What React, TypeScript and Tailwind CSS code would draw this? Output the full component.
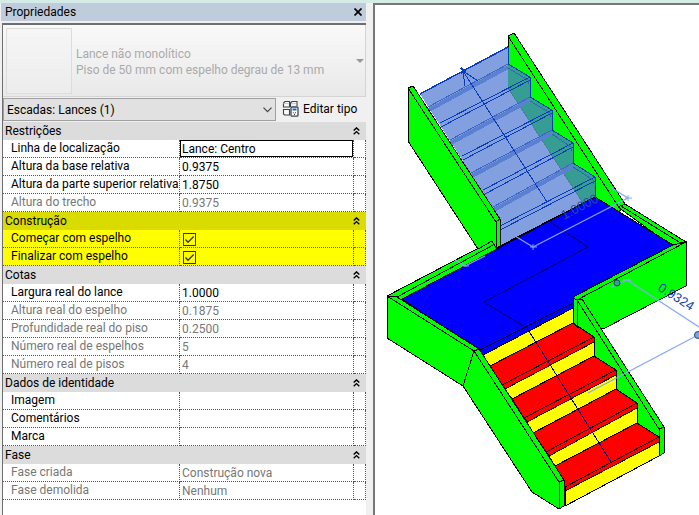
import React from 'react';
import clsx from 'clsx';

interface Property {
  label: string;
  value?: string;
  checked?: boolean;
  readOnly?: boolean;
  active?: boolean;
}

interface PropertyGroup {
  title: string;
  highlight?: boolean;
  items: Property[];
}

const groups: PropertyGroup[] = [
  {
    title: 'Restrições',
    items: [
      { label: 'Linha de localização', value: 'Lance: Centro', active: true },
      { label: 'Altura da base relativa', value: '0.9375' },
      { label: 'Altura da parte superior relativa', value: '1.8750' },
      { label: 'Altura do trecho', value: '0.9375', readOnly: true },
    ],
  },
  {
    title: 'Construção',
    highlight: true,
    items: [
      { label: 'Começar com espelho', checked: true },
      { label: 'Finalizar com espelho', checked: true },
    ],
  },
  {
    title: 'Cotas',
    items: [
      { label: 'Largura real do lance', value: '1.0000' },
      { label: 'Altura real do espelho', value: '0.1875', readOnly: true },
      { label: 'Profundidade real do piso', value: '0.2500', readOnly: true },
      { label: 'Número real de espelhos', value: '5', readOnly: true },
      { label: 'Número real de pisos', value: '4', readOnly: true },
    ],
  },
  {
    title: 'Dados de identidade',
    items: [
      { label: 'Imagem', value: '' },
      { label: 'Comentários', value: '' },
      { label: 'Marca', value: '' },
    ],
  },
  {
    title: 'Fase',
    items: [
      { label: 'Fase criada', value: 'Construção nova', readOnly: true },
      { label: 'Fase demolida', value: 'Nenhum', readOnly: true },
    ],
  },
];

const CollapseIcon = () => (
  <svg viewBox="0 0 7 8" className="h-2 w-[7px]" fill="none" stroke="#000" strokeWidth="1.4">
    <path d="M0.7 3.6 L3.5 0.9 L6.3 3.6 M0.7 7.3 L3.5 4.6 L6.3 7.3" />
  </svg>
);

const EditTypeIcon = () => (
  <svg viewBox="0 0 17 17" className="h-[17px] w-[17px] shrink-0" fill="none" stroke="#3c4450" strokeWidth="1.1">
    <path d="M3 1.5h4.5v5.5H1.5V3zM10 1.5h5V6M10 1.5L8.5 3v4M1.5 9.5h6V15h-5l-1-1z" fill="#fafafa" />
    <path d="M1.5 3.5h5M9 3.5h5" stroke="#c8ccd2" />
    <rect x="9" y="7" width="7" height="9.2" rx="1" fill="#fff" strokeWidth="1.3" />
    <path d="M10.5 9.5h4" stroke="#1464c8" strokeWidth="2" />
    <path d="M10.8 12.7h1M13 12.7h1M12 14.4h1" />
  </svg>
);

const PropertyRow: React.FC<{ item: Property; id: string; highlight?: boolean }> = ({ item, id, highlight }) => (
  <tr className={clsx('h-[18px]', highlight ? 'bg-[#ffff00]' : 'bg-white')}>
    <th
      scope="row"
      className="h-[18px] border-r border-b border-dotted border-[#555] p-0 pl-2 text-left font-normal whitespace-nowrap"
    >
      <label htmlFor={id} className={clsx('block h-[17px] leading-[17px]', item.readOnly && 'text-[#777]')}>
        {item.label}
      </label>
    </th>
    <td className="h-[18px] border-r border-b border-dotted border-[#555] p-0">
      {item.checked !== undefined ? (
        <span className="relative block h-[17px] pt-[3px] pl-[3px]">
          <input
            id={id}
            type="checkbox"
            defaultChecked={item.checked}
            className="peer block h-[13px] w-[13px] appearance-none border border-[#333300]"
          />
          <svg
            viewBox="0 0 13 13"
            className="pointer-events-none invisible absolute top-[3px] left-[3px] h-[13px] w-[13px] peer-checked:visible"
            fill="none"
            stroke="#333300"
            strokeWidth="1.3"
          >
            <path d="M2.5 6.5 L5 9.2 L10.7 3.5" />
          </svg>
        </span>
      ) : (
        <input
          id={id}
          type="text"
          defaultValue={item.value}
          disabled={item.readOnly}
          className={clsx(
            'block h-[17px] w-full border bg-transparent pl-px leading-[15px] outline-none',
            item.active ? 'border-black' : 'border-transparent',
            item.readOnly && 'text-[#777]'
          )}
        />
      )}
    </td>
    <td className="h-[18px] border-r border-b border-dotted border-[#555] p-0" />
  </tr>
);

const PropertyTable = () => (
  <table className="w-full table-fixed border-separate border-spacing-0">
    <colgroup>
      <col className="w-[177px]" />
      <col />
      <col className="w-3" />
    </colgroup>
    {groups.map((group, g) => (
      <tbody key={group.title}>
        <tr className={clsx('h-[18px]', group.highlight ? 'bg-[#dadc00]' : 'bg-[#dcdcdc]')}>
          <th colSpan={3} scope="rowgroup" className="h-[18px] p-0 font-normal">
            <button type="button" className="flex h-[18px] w-full items-center justify-between pr-[6px] pl-[2px]">
              <span className="leading-[18px]">{group.title}</span>
              <CollapseIcon />
            </button>
          </th>
        </tr>
        {group.items.map((item, i) => (
          <PropertyRow key={item.label} item={item} id={`prop-${g}-${i}`} highlight={group.highlight} />
        ))}
      </tbody>
    ))}
  </table>
);

const PropertiesPanel = () => (
  <aside className="flex min-w-0 flex-col pr-[7px] pl-[2px]">
    <header className="-ml-px flex h-[18px] items-center justify-between bg-[#bfccdb] pl-1">
      <h1 className="leading-[18px]">Propriedades</h1>
      <button type="button" aria-label="Fechar" className="flex h-4 w-4 items-center justify-center">
        <svg viewBox="0 0 8 8" className="h-2 w-2" stroke="#000" strokeWidth="1.7">
          <path d="M0.5 0.5 L7.5 7.5 M7.5 0.5 L0.5 7.5" />
        </svg>
      </button>
    </header>

    <div className="mt-[2px] flex flex-1 flex-col border-t-2 border-l border-[#6e6e6e] bg-white">
      <button
        type="button"
        disabled
        className="flex h-[72px] items-center border-r border-b border-[#d4d4d4] bg-linear-to-b from-[#f9f9f9] to-[#e9e9e9] pr-px pl-[3px] text-left text-[#aaa]"
      >
        <span className="h-[66px] w-[66px] shrink-0 border border-[#dcdcdc] bg-linear-to-b from-[#f6f6f6] to-[#ececec]" />
        <span className="ml-1 flex-1 pt-[2px] leading-4 whitespace-nowrap">
          Lance não monolítico
          <br />
          Piso de 50 mm com espelho degrau de 13 mm
        </span>
        <svg viewBox="0 0 8 4" className="h-1 w-2 shrink-0" fill="#999">
          <path d="M0 0h8L4 4z" />
        </svg>
      </button>

      <div className="flex h-[25px] items-center bg-[#f0f0f0]">
        <div className="relative flex-1">
          <select
            aria-label="Seleção"
            className="block h-[23px] w-full appearance-none border border-[#a0a0a0] bg-[#e1e1e1] pl-[3px] leading-[20px]"
          >
            <option>Escadas: Lances (1)</option>
          </select>
          <svg
            viewBox="0 0 9 6"
            className="pointer-events-none absolute top-[9px] right-1 h-[6px] w-[9px]"
            fill="none"
            stroke="#444"
            strokeWidth="1.2"
          >
            <path d="M0.5 0.7 L4.5 4.7 L8.5 0.7" />
          </svg>
        </div>
        <button type="button" className="flex w-[90px] items-center gap-1 pb-[2px] pl-[6px] whitespace-nowrap">
          <EditTypeIcon />
          Editar tipo
        </button>
      </div>

      <PropertyTable />
    </div>
  </aside>
);

// right end, then left end of every riser foot and tread nose
const upperFeet = ['508,64 428,107', '530,97 450,140', '552,130 471,173', '573,163 493,207'];
const upperNoses = ['530,77 440,123', '552,110 462,156', '573,143 483,190', '595,177 500,226'];
const upperNosesLow = ['530,80 441,127', '552,113 463,160', '573,147 485,194', '595,181 500,230'];
const upperTreadSides = [
  'M508 68L528 80L528 84',
  'M530 101L550 113L550 117',
  'M552 134L571 147L571 151',
  'M573 167L593 180L593 184',
];

const treads = [
  '573,323 594,337 594,342 505,389 502,385 490,366',
  '594,356 616,370 616,375 527,422 524,418 512,399',
  '616,389 637,403 637,408 549,456 546,452 533,433',
  '637,423 659,437 659,442 565,491 565,487 555,466',
];
const risers = [
  '483,355 573,308 573,323 490,366',
  '505,389 594,342 594,356 512,399',
  '527,422 616,375 616,389 533,433',
  '549,456 637,408 637,423 555,466',
  '565,491 659,442 659,456 565,506',
];
const treadNoses = ['594,337 502,385', '616,370 524,418', '637,403 546,452', '659,437 565,487'];

const StairModel = () => (
  <svg
    viewBox="375 5 324 510"
    className="block h-auto w-full"
    role="img"
    aria-label="Escada"
    fill="none"
    stroke="#000"
    strokeWidth="1"
    shapeRendering="crispEdges"
  >
    {/* upper flight, right stringer */}
    <path d="M508 36L514 33L625 204L618 213L595 197L508 104z" fill="#00ff00" />
    <path d="M508 36L618 206" />

    {/* landing */}
    <path d="M387 296L492 241L497 244L497 250L402 300z" fill="#00ff00" />
    <path d="M397 297L495 244" />
    <path d="M618 207L625 204L686 242L673 247z" fill="#00ff00" />
    <path d="M621 206L679 242L686 242" />
    <path d="M402 299L595 197L673 245L573 298L573 308L483 355z" fill="#0000ff" />
    <path d="M478 351L573 303" />
    <path d="M550 222L588 247L484 302L527 328" stroke="#000080" />

    {/* upper flight, selected */}
    <path
      d="M420 94L508 47V64L530 77V97L552 110V130L573 143V163L595 177V197L500 246V219z"
      fill="#829fdf"
      stroke="none"
    />
    <path
      d="M508 64L530 77V97L552 110V130L573 143V163L595 177V197L583 203L508 88z"
      fill="#359d92"
      stroke="none"
    />
    <path d="M508 88L583 203" stroke="#4c7f9c" />
    <g stroke="#5b80d2" strokeWidth="4">
      <path d="M508 67L429 110M530 100L451 143M552 133L472 176M573 166L494 210" />
    </g>
    <g stroke="#0a3cb8">
      {upperFeet.map((points) => (
        <polyline key={points} points={points} stroke="#3d66c6" />
      ))}
      {upperNoses.map((points) => (
        <polyline key={points} points={points} />
      ))}
      {upperNosesLow.map((points) => (
        <polyline key={points} points={points} />
      ))}
      {upperTreadSides.map((d) => (
        <path key={d} d={d} stroke="#2f66b4" />
      ))}
      <path d="M508 47V64L530 77V97L552 110V130L573 143V163L595 177V197" />
      <path d="M420 94L508 47" strokeWidth="1.5" />
      <path d="M463 71L547 202M463 71L465 86M463 71L478 81" />
      <path d="M461 68l5 5M461 73l5-3" strokeWidth="1.5" />
    </g>
    <path d="M500 246L595 197" />

    {/* upper flight, left stringer */}
    <path d="M408 88L413 86L500 219V246L496 248L492 241L478 249L408 141z" fill="#00ff00" />
    <path d="M408 88L496 222V248M496 222L500 219" />

    {/* lower flight */}
    {risers.map((points) => (
      <polygon key={points} points={points} fill="#ffff00" />
    ))}
    {treads.map((points) => (
      <polygon key={points} points={points} fill="#ff0000" />
    ))}
    {treadNoses.map((points) => (
      <polyline key={points} points={points} />
    ))}
    <path d="M527 328L611 462" stroke="#000080" />

    {/* landing front wall and lower right stringer */}
    <path d="M573 297L673 245L686 242V286L603 329L577 327L573 323z" fill="#00ff00" />
    <path d="M577 300L686 242" />
    <path
      d="M577 300L582 299L664 427V453L659 456V437L637 423V403L616 389V370L594 356V337L573 323V298z"
      fill="#00ff00"
    />
    <path d="M577 300V325M577 300L659 429V456M659 429L664 427" />

    {/* landing left wall and lower left stringer */}
    <path d="M387 296L397 297L479 349L564 480V506L559 509L532 492L463 386L387 338z" fill="#00ff00" />
    <path d="M387 296L474 351L559 482V509M559 482L564 480M474 351L463 386M474 351L479 349" />

    {/* temporary dimensions */}
    <g stroke="#86a6f7" shapeRendering="auto">
      <path d="M533 247L628 198M610 187L628 198M515 236L533 247M455 260L465 266L485 256" strokeWidth="1.3" />
      <path d="M530 247h7M533 244v6M625 198h7M628 195v6M461 266h8" />
      <path d="M627 280L699 327M611 287L627 280M623 280h8M588 393L698 335" strokeWidth="1.3" />
    </g>
    <g shapeRendering="auto" stroke="#24496e">
      <circle cx="617" cy="283" r="3" fill="#2fa58c" />
      <circle cx="698" cy="335" r="3.5" fill="#7ba4e6" />
    </g>
    <g stroke="none" fontSize="13" className="font-['Liberation_Sans',sans-serif]">
      <text transform="translate(564 220) rotate(-28)" fill="#1f4fa0">
        1.0000
      </text>
      <text transform="translate(657 290) rotate(32)" fill="#0a3cb4">
        0.9324
      </text>
    </g>
  </svg>
);

export default function App() {
  return (
    <div className="flex min-h-screen flex-col bg-[#f0f0f0] font-[Roboto,'Noto_Sans',sans-serif] text-[12px] text-black">
      <div className="h-[3px] bg-[#d5ece6]" />
      <main className="grid flex-1 grid-cols-[373fr_326fr]">
        <PropertiesPanel />
        <section className="min-w-0 border-t-2 border-l-2 border-[#777] bg-white">
          <StairModel />
        </section>
      </main>
    </div>
  );
}
